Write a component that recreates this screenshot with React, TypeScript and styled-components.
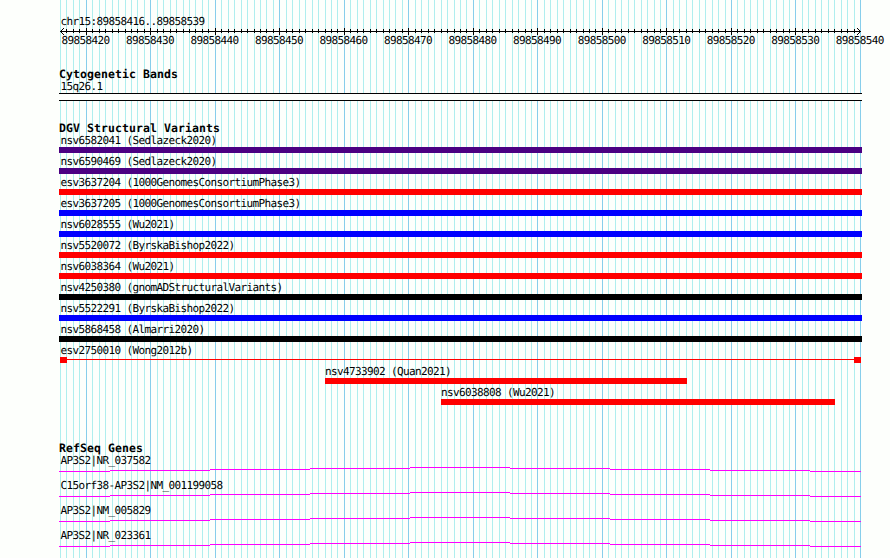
import React from 'react';
import styled, { createGlobalStyle } from 'styled-components';

const REGION_START = 89858416;
const REGION_END = 89858540;
const PLOT_WIDTH = 800;

const GlobalStyle = createGlobalStyle`
  body {
    margin: 0;
    background-color: #fdfffc;
  }
`;

const Browser = styled.div`
  position: relative;
  box-sizing: border-box;
  width: 890px;
  height: 558px;
  padding: 16px 0 0 59px;
  overflow: hidden;
  background-color: #fdfffc;
  color: black;
  font-family: 'DejaVu Sans Mono', 'Liberation Mono', monospace;
`;

const GridLines = styled.svg`
  position: absolute;
  top: 0;
  left: 60px;
  shape-rendering: crispEdges;
`;

const Content = styled.div`
  position: relative;
  display: flex;
  flex-direction: column;
  width: 803px;
`;

const Label = styled.div<{ $indent?: number }>`
  height: 12px;
  padding-left: ${(props) => props.$indent ?? 1.5}px;
  font-size: 11px;
  line-height: 12px;
  letter-spacing: -0.622px;
  text-rendering: geometricPrecision;
  white-space: pre;
`;

const Title = styled.div`
  height: 13px;
  font-size: 11.5px;
  font-weight: bold;
  line-height: 12px;
  letter-spacing: 0.077px;
  text-rendering: geometricPrecision;
  white-space: pre;
`;

const Ruler = styled.svg`
  display: block;
  margin-left: 1px;
  overflow: visible;
  shape-rendering: crispEdges;
`;

const TickLabels = styled.div`
  display: grid;
  grid-template-columns: repeat(13, 64.516px);
  margin-left: 1px;
`;

const Track = styled.section<{ $gap: number }>`
  margin-top: ${(props) => props.$gap}px;
`;

const Band = styled.div`
  box-sizing: border-box;
  height: 8px;
  border-top: 1px solid black;
  border-bottom: 1px solid black;
  background-color: #fdfffc;
`;

const VariantRow = styled.div<{ $start: number }>`
  height: 21px;
  margin-left: ${(props) => props.$start}px;
`;

const Bar = styled.div<{ $color: string; $width: number }>`
  width: ${(props) => props.$width}px;
  height: 6px;
  background-color: ${(props) => props.$color};
`;

const SplitBar = styled.div`
  display: flex;
  justify-content: space-between;
  width: 801px;
  margin-left: 1px;
  background: linear-gradient(red, red) 0 2px / 100% 1px no-repeat;
`;

const GeneRow = styled.div`
  height: 25px;
`;

const Intron = styled.svg`
  display: block;
  shape-rendering: crispEdges;
`;

interface Variant {
  name: string,
  color: string,
  start?: number,
  width?: number,
  split?: boolean,
}

const variants: Variant[] = [
  { name: 'nsv6582041 (Sedlazeck2020)', color: '#4b0082' },
  { name: 'nsv6590469 (Sedlazeck2020)', color: '#4b0082' },
  { name: 'esv3637204 (1000GenomesConsortiumPhase3)', color: 'red' },
  { name: 'esv3637205 (1000GenomesConsortiumPhase3)', color: 'blue' },
  { name: 'nsv6028555 (Wu2021)', color: 'blue' },
  { name: 'nsv5520072 (ByrskaBishop2022)', color: 'red' },
  { name: 'nsv6038364 (Wu2021)', color: 'red' },
  { name: 'nsv4250380 (gnomADStructuralVariants)', color: 'black' },
  { name: 'nsv5522291 (ByrskaBishop2022)', color: 'blue' },
  { name: 'nsv5868458 (Almarri2020)', color: 'black' },
  { name: 'esv2750010 (Wong2012b)', color: 'red', split: true },
  {
    name: 'nsv4733902 (Quan2021)', color: 'red', start: 266, width: 362,
  },
  {
    name: 'nsv6038808 (Wu2021)', color: 'red', start: 382, width: 394,
  },
];

const genes = [
  'AP3S2|NR_037582',
  'C15orf38-AP3S2|NM_001199058',
  'AP3S2|NM_005829',
  'AP3S2|NR_023361',
];

// [x, y, width] of each flat step of an intron line
const intronSteps = [
  [0, 4, 51], [51, 3, 100], [151, 2, 100], [251, 1, 100], [351, 0, 100],
  [451, 1, 100], [551, 2, 100], [651, 3, 100], [751, 4, 51],
];

const positions = Array.from(
  { length: REGION_END - REGION_START + 1 },
  (_, i) => REGION_START + i,
);
const majorPositions = positions.filter((p) => p % 10 === 0);

const toX = (position: number) => Math.round(
  ((position - REGION_START) * PLOT_WIDTH) / (REGION_END - REGION_START),
);

function Grid() {
  return (
    <GridLines width={801} height={558}>
      {positions.map((p) => (
        <rect
          key={p}
          x={toX(p)}
          y={0}
          width={1}
          height={558}
          fill={p % 10 === 0 ? '#87ceeb' : '#afeeee'}
        />
      ))}
    </GridLines>
  );
}

function Scale() {
  return (
    <>
      <Ruler width={801} height={7}>
        <rect x={0} y={3} width={801} height={1} />
        {positions.slice(1, -1).map((p) => (
          p % 10 === 0
            ? <rect key={p} x={toX(p)} y={0} width={1} height={7} />
            : <rect key={p} x={toX(p)} y={1} width={1} height={4} />
        ))}
        {[1, 2, 3].map((d) => (
          <React.Fragment key={d}>
            <rect x={d} y={3 - d} width={1} height={1} />
            <rect x={d} y={3 + d} width={1} height={1} />
            <rect x={800 - d} y={3 - d} width={1} height={1} />
            <rect x={800 - d} y={3 + d} width={1} height={1} />
          </React.Fragment>
        ))}
      </Ruler>
      <TickLabels>
        {majorPositions.map((p) => <Label key={p}>{p}</Label>)}
      </TickLabels>
    </>
  );
}

function VariantGlyph(props: { variant: Variant }) {
  const { variant } = props;
  if (variant.split) {
    return (
      <SplitBar>
        <Bar $color={variant.color} $width={7} />
        <Bar $color={variant.color} $width={7} />
      </SplitBar>
    );
  }
  return <Bar $color={variant.color} $width={variant.width ?? 803} />;
}

const App = () => (
  <Browser>
    <GlobalStyle />
    <Grid />
    <Content>
      <Label>chr15:89858416..89858539</Label>
      <Track $gap={0}>
        <Scale />
      </Track>
      <Track $gap={21}>
        <Title>Cytogenetic Bands</Title>
        <Label>15q26.1</Label>
        <Band />
      </Track>
      <Track $gap={21}>
        <Title>DGV Structural Variants</Title>
        {variants.map((v) => (
          <VariantRow key={v.name} $start={v.start ?? 0}>
            <Label $indent={v.start ? 0 : undefined}>{v.name}</Label>
            <VariantGlyph variant={v} />
          </VariantRow>
        ))}
      </Track>
      <Track $gap={34}>
        <Title>RefSeq Genes</Title>
        {genes.map((name) => (
          <GeneRow key={name}>
            <Label>{name}</Label>
            <Intron width={802} height={5}>
              {intronSteps.map(([x, y, width]) => (
                <rect key={x} x={x} y={y} width={width} height={1} fill="magenta" />
              ))}
            </Intron>
          </GeneRow>
        ))}
      </Track>
    </Content>
  </Browser>
);

export default App;
